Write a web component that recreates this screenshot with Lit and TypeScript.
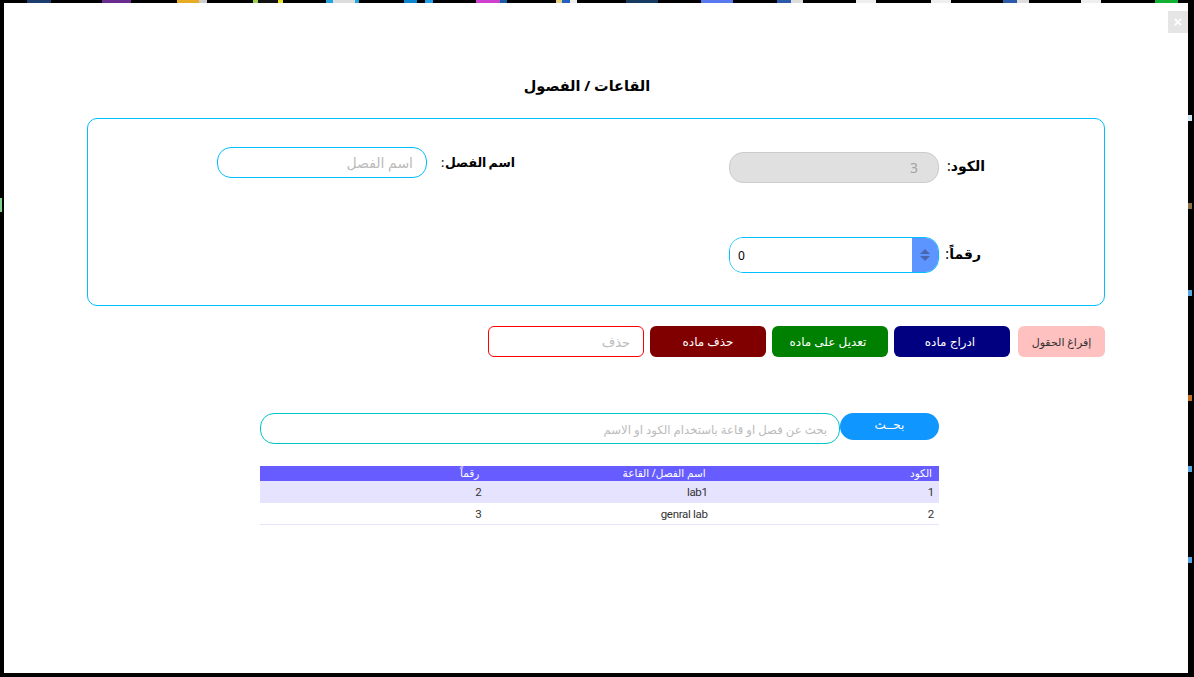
import { LitElement, html, css } from "lit";
import { customElement } from "lit/decorators.js";

const TOP = [
  [27, 24, "#1d3c6e"], [102, 29, "#6a2a90"], [177, 22, "#e8ac24"], [199, 8, "#ccc"], [253, 5, "#9ad04c"], [258, 20, "#111"], [278, 5, "#e8e020"],
  [326, 7, "#22a5e0"], [333, 22, "#ddd"], [355, 4, "#22a5e0"], [404, 13, "#0a86d0"], [425, 8, "#22a0e8"], [476, 24, "#d040d0"], [500, 7, "#1c5aa0"],
  [556, 6, "#e8d080"], [562, 8, "#2060c0"], [570, 7, "#eee"],
  [626, 32, "#173a60"], [701, 32, "#5a78f0"], [777, 14, "#2a5aa8"], [791, 12, "#ddd"], [856, 20, "#eee"], [931, 20, "#eee"], [1003, 14, "#2a5aa8"], [1017, 12, "#ddd"], [1081, 20, "#eee"], [1155, 23, "#10b030"],
];
const RIGHT = [[115, "#cfe6f5"], [203, "#8a7040"], [290, "#5aa5e0"], [395, "#c07020"], [466, "#5aa5e0"], [557, "#5aa5e0"]];

@customElement("app-root")
export class AppRoot extends LitElement {
  static styles = css`
    :host { display: block; position: relative; width: 1194px; height: 677px; overflow: hidden; background: #000; font-family: "Noto Sans", "DejaVu Sans", sans-serif; }
    .peek { position: absolute; top: 0; height: 3px; }
    .peek-side { position: absolute; left: 1188px; width: 4px; height: 6px; }
    .peek-left { position: absolute; left: 0; top: 198px; width: 2px; height: 14px; background: #7fd08a; }
    .modal { position: absolute; left: 4px; top: 3px; width: 1184px; height: 670px; background: #fff; }
    .close { position: absolute; left: 1164px; top: 8px; width: 20px; height: 22px; background: #e5e5e5; color: #fff; font-size: 15px; font-weight: 700; line-height: 20px; border: 0; padding: 0; }
    .content { direction: rtl; display: flex; flex-direction: column; padding: 0 83px; box-sizing: border-box; }
    h1 { margin: 0; padding: 70px 18px 0 0; height: 45px; box-sizing: content-box; text-align: center; font-size: 14.5px; line-height: 24px; font-weight: 700; color: #000; }
    .panel { height: 188px; box-sizing: border-box; border: 1px solid #00bfff; border-radius: 10px; display: grid; grid-template-columns: 1fr 1fr; }
    .col { display: flex; flex-direction: column; }
    .col-r { padding: 33px 119px 0 0; gap: 54px; }
    .col-l { padding: 28px 81px 0 0; }
    .field { display: flex; align-items: center; gap: 6px; }
    label { font-size: 14px; font-weight: 700; color: #000; white-space: nowrap; box-sizing: border-box; display: flex; justify-content: space-between; }
    .col-r label { width: 40px; padding: 0 0 4px 2px; }
    .col-r label.shift { padding-right: 4px; }
    .col-l label { width: 82px; padding-left: 8px; font-size: 12.5px; word-spacing: -1px; }
    .colon { font-weight: 400; }
    input { font: inherit; outline: none; box-sizing: border-box; background: #fff; }
    input::placeholder { color: #bbb; opacity: 1; }
    .code { width: 210px; height: 31px; border: 1px solid #ccc; background: #e0e0e0; color: #a8a0a0; border-radius: 14px; padding: 0 20px; font-size: 14px; }
    .num { width: 210px; height: 36px; border: 1px solid #00bfff; border-radius: 14px; overflow: hidden; display: flex; flex-direction: row-reverse; box-sizing: border-box; background: #fff; }
    .num input { flex: 1; min-width: 0; border: 0; padding: 0 8px; direction: ltr; text-align: left; font-size: 12px; color: #000; height: 100%; }
    .spin { width: 26px; background: #5c95ff; display: flex; flex-direction: column; align-items: center; justify-content: center; gap: 2px; }
    .spin i { width: 0; height: 0; border-left: 5px solid transparent; border-right: 5px solid transparent; }
    .up { border-bottom: 5px solid #4a66b0; }
    .down { border-top: 5px solid #4a66b0; }
    .name { width: 210px; height: 31px; border: 1px solid #00bfff; border-radius: 14px; padding: 0 13px; font-size: 14px; }
    .actions { display: flex; gap: 6px; margin-top: 20px; height: 31px; }
    button.act { border: 1px solid transparent; border-radius: 6px; font: inherit; font-size: 12px; color: #fff; padding: 0; height: 31px; width: 116px; }
    button.clear { background: #ffc0c0; color: #333; width: 87px; margin-left: 2px; font-size: 11px; }
    button.insert { background: #000080; padding-right: 4px; }
    button.edit { background: #008000; padding-right: 4px; }
    .del { background: #800000; }
    .delinput { width: 156px; height: 31px; border: 1px solid #f00; border-radius: 6px; padding: 0 13px; font-size: 13px; }
    .search { display: flex; margin: 56px 166px 0 0; width: 679px; align-items: flex-start; }
    .sbtn { width: 99px; height: 27px; background: #0f96ff; color: #fff; border: 0; border-radius: 14px; font: inherit; font-size: 12px; padding: 0 0 4px; }
    .sinput { width: 580px; height: 31px; border: 1px solid #00c5c5; border-radius: 14px; padding: 0 12px; font-size: 11.7px; }
    .table { margin: 22px 166px 0 0; width: 679px; }
    .tr { display: grid; grid-template-columns: repeat(3, 1fr); }
    .th { height: 15px; background: #665cff; color: #fff; font-size: 10.5px; line-height: 14px; font-weight: 400; padding-right: 7px; }
    .td { height: 22px; font-family: Roboto, "Noto Sans", sans-serif; font-size: 11.5px; letter-spacing: -0.3px; line-height: 22px; color: #333; padding-right: 5px; box-sizing: border-box; }
    .r1 .td { background: #e6e3ff; }
    .r2 .td { border-bottom: 1px solid #e6e3ff; }
  `;

  render() {
    const rows = [["1", "lab1", "2"], ["2", "genral lab", "3"]];
    return html`
      ${TOP.map(([x, w, c]) => html`<span class="peek" style="left:${x}px;width:${w}px;background:${c}"></span>`)}
      ${RIGHT.map(([y, c]) => html`<span class="peek-side" style="top:${y}px;background:${c}"></span>`)}
      <span class="peek-left"></span>
      <div class="modal">
        <button class="close">×</button>
        <div class="content">
          <h1>القاعات / الفصول</h1>
          <div class="panel">
            <div class="col col-r">
              <div class="field"><label>الكود <span class="colon">:</span></label><input class="code" value="3" disabled /></div>
              <div class="field"><label class="shift">رقماً <span class="colon">:</span></label>
                <div class="num"><input type="text" value="0" /><div class="spin"><i class="up"></i><i class="down"></i></div></div>
              </div>
            </div>
            <div class="col col-l">
              <div class="field"><label>اسم الفصل <span class="colon">:</span></label><input class="name" placeholder="اسم الفصل" /></div>
            </div>
          </div>
          <div class="actions">
            <button class="act clear">إفراغ الحقول</button>
            <button class="act insert">ادراج ماده</button>
            <button class="act edit">تعديل على ماده</button>
            <button class="act del">حذف ماده</button>
            <input class="delinput" placeholder="حذف" />
          </div>
          <div class="search">
            <button class="sbtn">بحــث</button>
            <input class="sinput" placeholder="بحث عن فصل او قاعة باستخدام الكود او الاسم" />
          </div>
          <div class="table">
            <div class="tr"><div class="th">الكود</div><div class="th">اسم الفصل/ القاعة</div><div class="th">رقماً</div></div>
            ${rows.map((r, i) => html`<div class="tr r${i + 1}">${r.map((c) => html`<div class="td">${c}</div>`)}</div>`)}
          </div>
        </div>
      </div>
    `;
  }
}
